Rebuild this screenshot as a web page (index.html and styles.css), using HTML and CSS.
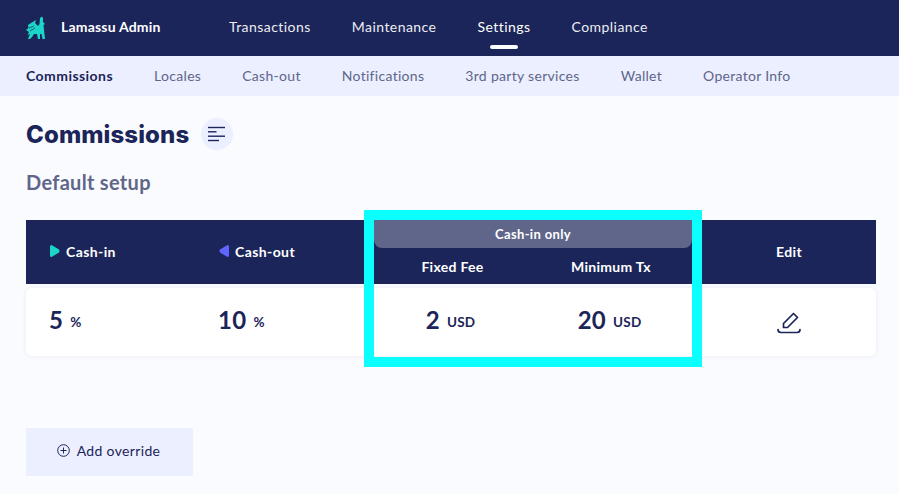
FILE: index.html
```html
<!DOCTYPE html>
<html lang="en">
<head>
    <meta charset="UTF-8">
    <meta name="viewport" content="width=device-width, initial-scale=1.0">
    <title>Lamassu Admin - Commissions</title>
    <link rel="stylesheet" href="styles.css">
</head>
<body>
    <header class="topbar">
        <div class="brand">
            <svg class="brand-logo" width="20" height="24" viewBox="0 0 20 24">
                <path fill="#1bd6c8" d="M14 2L16 .5 17 2V6L19 8 17.500 9 18 14 19 23H16.500L15.500 18H14V23H12L11 18H8L6 21 4 23H2L4 18 1.500 19 3 16 0 14 2.500 12 2 9 5 7 10 4 9 7 12 10 13.500 8z"/>
                <path fill="none" stroke="#1b2559" stroke-width=".7" d="M3 12L8 10M4 15L9 12"/>
            </svg>
            <span class="brand-name">Lamassu Admin</span>
        </div>
        <nav class="mainnav">
            <a class="mainnav-item">Transactions</a>
            <a class="mainnav-item">Maintenance</a>
            <a class="mainnav-item active">Settings</a>
            <a class="mainnav-item">Compliance</a>
        </nav>
    </header>

    <nav class="subnav">
        <a class="subnav-item active">Commissions</a>
        <a class="subnav-item">Locales</a>
        <a class="subnav-item">Cash-out</a>
        <a class="subnav-item">Notifications</a>
        <a class="subnav-item">3rd party services</a>
        <a class="subnav-item">Wallet</a>
        <a class="subnav-item">Operator Info</a>
    </nav>

    <main class="content">
        <div class="title-row">
            <h1 class="title">Commissions</h1>
            <span class="round-btn">
                <svg width="18" height="16" viewBox="0 0 18 16">
                    <g fill="none" stroke="#1b2559" stroke-width="1.4">
                        <path d="M0 1.500h17"/>
                        <path d="M0 5.800h8.500"/>
                        <path d="M0 10.200h17"/>
                        <path d="M0 14.500h11"/>
                    </g>
                </svg>
            </span>
        </div>
        <h2 class="subtitle">Default setup</h2>

        <div class="table">
            <div class="thead">
                <div class="th th-main cell-left">
                    <svg width="10" height="12" viewBox="0 0 10 12"><path fill="#1bd6c8" d="M1.500 0L9 4.500Q10 6 9 7.500L1.500 12Q0 12 0 10.500V1.500Q0 0 1.500 0z"/></svg>
                    Cash-in
                </div>
                <div class="th th-main cell-left">
                    <svg width="10" height="12" viewBox="0 0 10 12"><path fill="#5f66ff" d="M8.500 0L1 4.500Q0 6 1 7.500L8.500 12Q10 12 10 10.500V1.500Q10 0 8.500 0z"/></svg>
                    Cash-out
                </div>
                <div class="th-group">
                    <div class="group-band">Cash-in only</div>
                    <div class="group-cols">
                        <div class="th">Fixed Fee</div>
                        <div class="th">Minimum Tx</div>
                    </div>
                </div>
                <div class="th th-main cell-edit">Edit</div>
            </div>
            <div class="row">
                <div class="td cell-left"><span class="num">5</span><span class="unit">%</span></div>
                <div class="td cell-left"><span class="num">10</span><span class="unit">%</span></div>
                <div class="td td-usd"><span class="num">2</span><span class="unit">USD</span></div>
                <div class="td td-usd"><span class="num">20</span><span class="unit">USD</span></div>
                <div class="td-edit cell-edit">
                    <svg width="24" height="22" viewBox="0 0 24 22">
                        <g fill="none" stroke="#1b2559" stroke-width="1.700" stroke-linejoin="round" stroke-linecap="round">
                            <path d="M6.500 15.500v-4L16.500 1.500l4 4-10 10z"/>
                            <path d="M1 17.500c0 2 1 3 3 3h16c2 0 3-1 3-3"/>
                        </g>
                    </svg>
                </div>
            </div>
            <div class="highlight"></div>
        </div>

        <button class="add-btn">
            <svg width="13" height="13" viewBox="0 0 13 13">
                <g fill="none" stroke="#1b2559" stroke-width="1">
                    <circle cx="6.500" cy="6.500" r="5.800"/>
                    <path d="M6.500 3.500v6M3.500 6.500h6"/>
                </g>
            </svg>
            <span class="add-label">Add override</span>
        </button>
    </main>
</body>
</html>
```

FILE: styles.css
```css
* { box-sizing: border-box; }
html, body { height: 100%; }
body {
    margin: 0;
    background-color: #fafbff;
    color: #1b2559;
    font-family: "Lato", "Open Sans", sans-serif;
    overflow: hidden;
}

.topbar {
    height: 56px;
    background-color: #1b2559;
    display: flex;
    align-items: center;
    padding-left: 26px;
}
.brand { display: flex; align-items: center; width: 203px; }
.brand-logo { margin-right: 15px; }
.brand-name { color: #fff; font-size: 14px; font-weight: 700; letter-spacing: 0.2px; margin-bottom: 3px; }
.mainnav { display: flex; gap: 41px; height: 100%; }
.mainnav-item {
    color: #fff;
    font-size: 14px;
    letter-spacing: 0.45px;
    line-height: 54px;
    position: relative;
    opacity: 0.92;
}
.mainnav-item.active { opacity: 1; }
.mainnav-item.active::after {
    content: "";
    position: absolute;
    left: 13px;
    right: 13px;
    bottom: 7px;
    height: 4px;
    border-radius: 2px;
    background-color: #fff;
}

.subnav {
    height: 40px;
    background-color: #ebefff;
    display: flex;
    align-items: center;
    gap: 41px;
    padding: 0 0 2px 26px;
}
.subnav-item { color: #5f668a; font-size: 14px; letter-spacing: 0.3px; }
.subnav-item.active { color: #1b2559; font-weight: 700; letter-spacing: 0.45px; }

.content { padding: 22px 23px 0 26px; }
.title-row { display: flex; align-items: center; height: 32px; }
.title {
    margin: 0;
    font-family: "Inter", sans-serif;
    font-size: 24px;
    font-weight: 800;
    letter-spacing: 0.1px;
}
.round-btn {
    width: 32px;
    height: 32px;
    margin-left: 12px;
    border-radius: 50%;
    background-color: #ebefff;
    display: flex;
    align-items: center;
    justify-content: center;
}
.subtitle {
    margin: 20px 0 0;
    color: #5f668a;
    font-size: 20px;
    font-weight: 700;
    letter-spacing: 0.3px;
    line-height: 24px;
}

.table { margin-top: 26px; position: relative; width: 850px; }
.thead, .row {
    display: grid;
    grid-template-columns: 169px 179px 157px 161px 184px;
}
.thead { height: 64px; background-color: #1b2559; }
.th {
    color: #fff;
    font-size: 14px;
    font-weight: 700;
    letter-spacing: 0.3px;
    display: flex;
    align-items: center;
    justify-content: center;
}
.th-main { letter-spacing: 0.4px; padding-bottom: 2px; }
.th svg { margin-right: 6px; }
.cell-left { justify-content: flex-start; padding-left: 24px; }
.cell-edit { padding-left: 10px; }
.th-group { grid-column: 3 / 5; display: flex; flex-direction: column; }
.group-band {
    height: 28px;
    background-color: #5f668a;
    border-radius: 0 0 8px 8px;
    color: #fff;
    font-size: 13px;
    font-weight: 700;
    letter-spacing: 0.35px;
    display: flex;
    align-items: center;
    justify-content: center;
}
.group-cols { flex: 1; display: grid; grid-template-columns: 157px 160px; }

.row {
    margin-top: 4px;
    height: 68px;
    background-color: #fff;
    border-radius: 6px;
    box-shadow: 0 0 4px rgba(27, 37, 89, 0.08);
}
.td { display: flex; align-items: center; justify-content: center; padding-bottom: 6px; }
.td.cell-left { justify-content: flex-start; padding-left: 23px; }
.td-usd { padding-right: 4px; }
.td-edit { display: flex; align-items: center; justify-content: center; padding-top: 2px; }
.num { font-size: 24px; font-weight: 700; letter-spacing: 0.3px; }
.unit { font-size: 13.5px; font-weight: 700; margin-left: 7px; padding-top: 6px; letter-spacing: 0.2px; }

.highlight {
    position: absolute;
    left: 338px;
    top: -10px;
    width: 338px;
    height: 157px;
    border: 10px solid #0cffff;
    pointer-events: none;
}

.add-btn {
    display: flex;
    align-items: center;
    justify-content: center;
    gap: 7px;
    width: 167px;
    height: 48px;
    margin-top: 72px;
    padding: 0 2px 4px 0;
    border: 0;
    background-color: #ebefff;
    color: #1b2559;
    font-family: inherit;
    font-size: 14px;
    letter-spacing: 0.35px;
}
```
